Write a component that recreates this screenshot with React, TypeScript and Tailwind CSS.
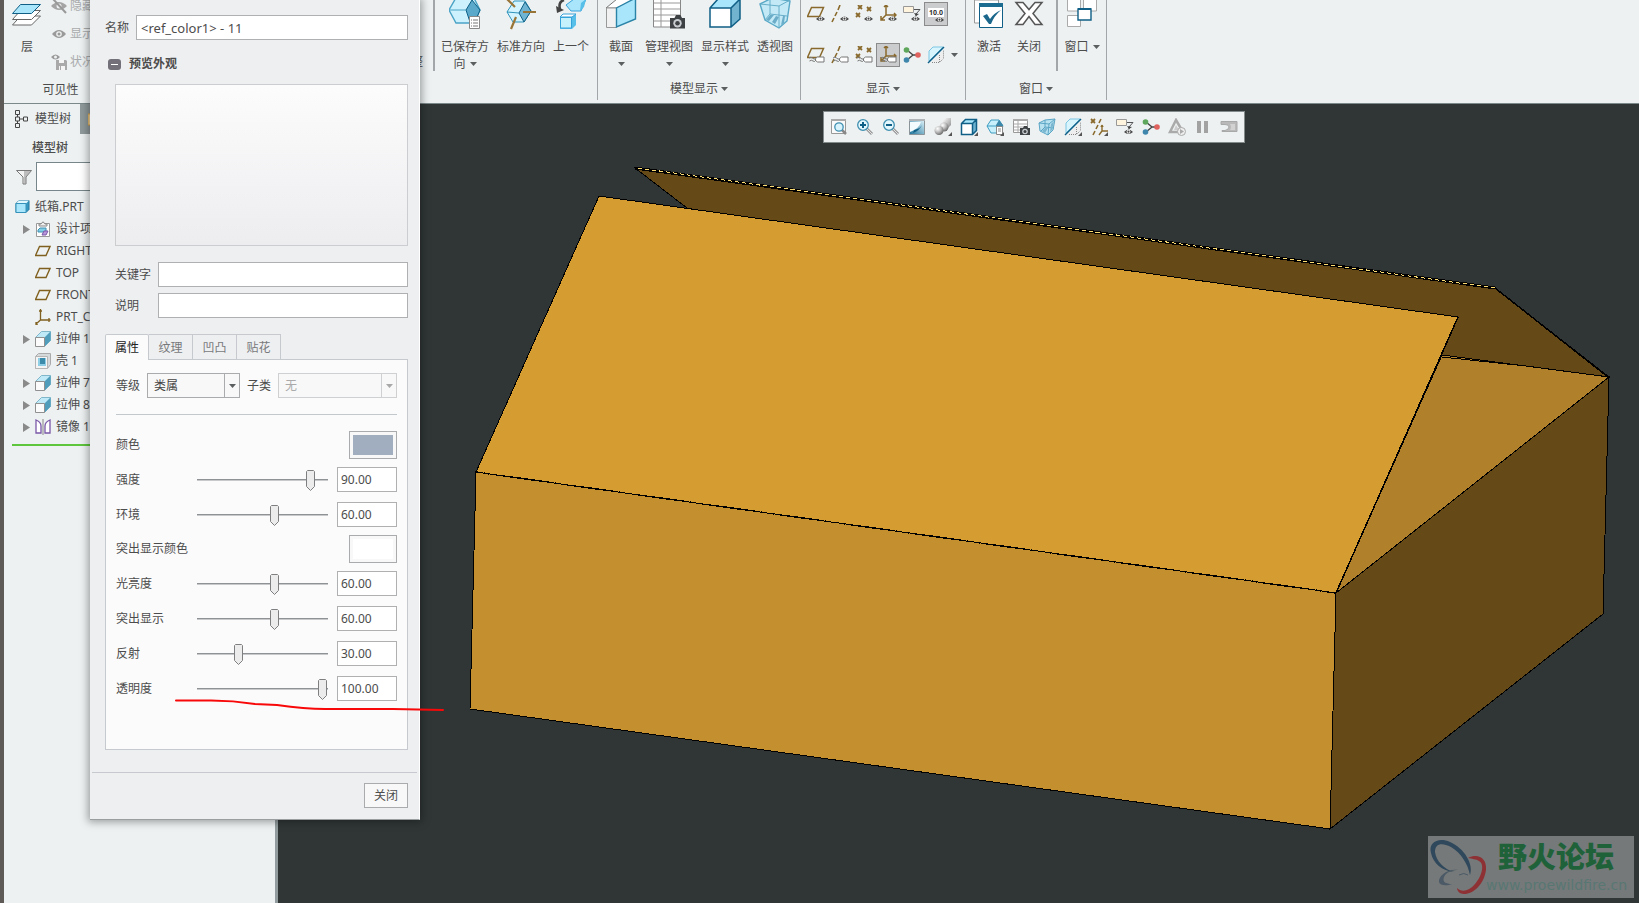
import type { ReactNode } from "react";

const OUT = "#0f5f86";
const SKY = "#a9e6fb";
const MID = "#6cb2d0";
const BRASS = "#8a6a2c";

type SvgProps = { w?: number; h?: number; children: ReactNode };

function Svg({ w = 18, h = 18, children }: SvgProps) {
  return (
    <svg width={w} height={h} viewBox={`0 0 ${w} ${h}`} fill="none" className="block shrink-0" aria-hidden="true">
      {children}
    </svg>
  );
}

function Caret({ light = false }: { light?: boolean }) {
  return (
    <svg width="7" height="4" viewBox="0 0 7 4" className="block shrink-0" aria-hidden="true">
      <path d="M0 0h7L3.500 4z" fill={light ? "#a8a8a8" : "#5c5f60"} />
    </svg>
  );
}

/* ---------- shared icon fragments ---------- */

const Eye = ({ x = 8, y = 10, c = "#444" }: { x?: number; y?: number; c?: string }) => (
  <g transform={`translate(${x} ${y})`}>
    <path d="M0 3Q4.500 -2 9 3Q4.500 7 0 3z" fill={c} />
    <circle cx="4.500" cy="2.700" r="1.900" fill="#fff" />
    <circle cx="4.500" cy="2.700" r="1.100" fill={c} />
  </g>
);

const Tag = () => (
  <g stroke="#777" fill="#fff">
    <path d="M8.500 12.500l2-1.500h6.500v5h-6.500l-2-1.500z" />
    <path d="M2 12q2-1.500 3.500 0t3 1M2.500 15q2-1.500 3.500 0t3-1" fill="none" />
  </g>
);

const Corner = () => <path d="M18 14v4h-4z" fill="#555" />;

const Cross = ({ x, y }: { x: number; y: number }) => (
  <path d={`M${x} ${y}l4 4m0-4l-4 4`} stroke={BRASS} strokeWidth="1.800" />
);

const Camera = ({ x = 8, y = 8 }: { x?: number; y?: number }) => (
  <g transform={`translate(${x} ${y})`}>
    <path d="M0 2h3l1-2h3l1 2h2v7H0z" fill="#3f4245" />
    <circle cx="5" cy="5.500" r="2.800" fill="#c9ced2" />
    <circle cx="5" cy="5.500" r="1.500" fill="#3f4245" />
  </g>
);

const Lens = ({ sign }: { sign?: ReactNode }) => (
  <>
    <path d="M10.500 10.500l5.500 5.500" stroke="#999" strokeWidth="3" />
    <path d="M10.500 10.500l5.500 5.500" stroke="#e3e3e3" strokeWidth="1" />
    <circle cx="7" cy="7" r="5.300" fill="#e4f7fd" stroke="#3f8fb0" strokeWidth="1.300" />
    {sign}
  </>
);

/* ---------- small icons ---------- */

const IcFit = () => (
  <Svg>
    <path d="M1.500 1.500h14v14h-14z" fill="#fafafa" stroke="#999" />
    <path d="M1 1h15v2H1z" fill="#aaa" />
    <path d="M12 12l4 4" stroke="#888" strokeWidth="2.500" />
    <circle cx="9" cy="9" r="4.200" fill="#d8f3fc" stroke="#3f8fb0" strokeWidth="1.300" />
  </Svg>
);
const IcZoomIn = () => <Svg><Lens sign={<path d="M4 7h6M7 4v6" stroke={OUT} strokeWidth="2" />} /></Svg>;
const IcZoomOut = () => <Svg><Lens sign={<path d="M4 7h6" stroke={OUT} strokeWidth="2" />} /></Svg>;
const IcRepaint = () => (
  <Svg>
    <defs>
      <linearGradient id="repaint" x1="1" y1="0" x2="0" y2="1">
        <stop offset="0" stopColor="#e4f7fd" />
        <stop offset="1" stopColor="#1d7299" />
      </linearGradient>
    </defs>
    <path d="M1.500 1.500h15v15h-15z" fill="url(#repaint)" stroke="#8b9498" />
    <path d="M2 4h11Q11 11 2 14z" fill="#f4fcff" />
    <path d="M1 1h16v2H1z" fill="#b0b4b6" />
    <path d="M14 7Q12 12 5 15l1-3Q12 11 14 7z" fill={OUT} />
  </Svg>
);
const IcShade = () => (
  <Svg>
    <defs>
      <linearGradient id="metal" x1="0" y1="0" x2="1" y2="1">
        <stop offset="0" stopColor="#fff" />
        <stop offset="1" stopColor="#8a8a8a" />
      </linearGradient>
      <radialGradient id="ball" cx=".35" cy=".3" r=".75">
        <stop offset="0" stopColor="#fff" />
        <stop offset=".5" stopColor="#bdbdbd" />
        <stop offset="1" stopColor="#666" />
      </radialGradient>
    </defs>
    <path d="M9 2l3-2h5v7l-3 3H9z" fill="url(#metal)" />
    <circle cx="10" cy="9" r="4.500" fill="url(#ball)" />
    <circle cx="5" cy="12.500" r="4.500" fill="url(#ball)" />
  </Svg>
);
const IcBox = () => (
  <Svg>
    <path d="M1.500 5.500l4-4h11v11l-4 4h-11z" fill={MID} />
    <path d="M1.500 5.500l4-4h11l-4 4z" fill={SKY} />
    <path d="M1.500 5.500h11v11h-11z" fill="#fff" />
    <path d="M1.500 5.500l4-4h11v11l-4 4h-11zh11v11m0-11l4-4" stroke={OUT} strokeWidth="1.500" />
  </Svg>
);
const IcOrient = () => (
  <Svg>
    <path d="M1 8l4-6h8l4 6-4 7H5z" fill="#c8effc" stroke="#3f9dc0" />
    <path d="M1 8h9" stroke="#3f9dc0" />
    <path d="M13 2l4 5v5h-7V7z" fill="#3c88ab" />
    <path d="M10.500 8.500h6v8h-6z" fill="#fff" stroke="#888" />
    <path d="M12 11h3m-3 2h3" stroke="#888" />
  </Svg>
);
const IcViewMgr = () => (
  <Svg>
    <path d="M1.500 1.500h14v13h-14z" fill="#fff" stroke="#999" />
    <path d="M1 1h15v2H1z" fill="#aaa" />
    <path d="M2 6h13M2 9h13M2 12h13M6 3v11" stroke="#aaa" />
    <Camera />
  </Svg>
);
const IcPersp = () => (
  <Svg>
    <path d="M1 5l6-3 10-1-2 11-5 5-8-4z" fill="#b9e2f1" stroke="#5aa5c4" />
    <path d="M1 5l10 1 6-5M11 6l-1 11M7 2v7l-4 4m4-4l9 1" stroke="#5aa5c4" />
    <path d="M4 13l4-4 2 1-3 5zm8 1l1-8 3-3-2 9z" fill="#7ab6cf" />
  </Svg>
);
const IcSection = () => (
  <Svg>
    <path d="M2 15V5l4-4h10z" fill="#d8f4fd" stroke="#7cc6e2" />
    <path d="M5 16.500h7.500l4-4V4z" fill="#eee" />
    <path d="M5 16.500h7.500l4-4V4M12.500 9v7" stroke="#888" strokeDasharray="1 1" />
    <path d="M1 17L17 1" stroke={OUT} strokeWidth="1.500" />
  </Svg>
);
const IcDatumAll = () => (
  <Svg>
    <Cross x={1} y={1} />
    <path d="M11 1L9 5M8 7l-2 4m-1 2l-2 4" stroke={BRASS} strokeWidth="1.600" />
    <path d="M12 7v6h6m-6 0l-3 4m3-10l-1 2m1-2l1 2" stroke={BRASS} strokeWidth="1.400" />
  </Svg>
);
const IcAnnot = () => (
  <Svg>
    <path d="M.5 1.500h10v6H.5z" fill="#fff5de" stroke="#999" />
    <path d="M11 4.500h6L13 9v2" stroke="#555" />
    <path d="M11 8l2 3 3-2z" fill="#444" />
    <Eye x={8} y={11} />
  </Svg>
);
const IcSpin = () => (
  <Svg>
    <path d="M4 4l6 5m0 0l-6 5m6-5h5" stroke="#444" strokeWidth="1.400" />
    <circle cx="3.500" cy="4" r="2.800" fill="#5ea65b" />
    <circle cx="3.500" cy="14" r="2.800" fill="#3f86ac" />
    <circle cx="15" cy="9" r="2.800" fill="#e0625f" />
  </Svg>
);
const IcSim = () => (
  <Svg>
    <path d="M8 2l7 12H2z" stroke="#aaa" strokeWidth="2.500" />
    <path d="M8 7l3 5H6z" fill="#ccc" />
    <circle cx="13.500" cy="13.500" r="4" fill="#eee" stroke="#aaa" />
    <path d="M12 11l4 2.500-4 2.500z" fill="#aaa" />
  </Svg>
);
const IcPause = () => <Svg><path d="M3 3h4v12H3zm7 0h4v12h-4z" fill="#a2a2a2" /></Svg>;
const IcGauge = () => (
  <Svg>
    <path d="M1 3.500h16v10H2v-1h3q4-1 4-3.500T5 6.500H1z" fill="#b9b9b9" stroke="#a8a8a8" />
    <path d="M10 6h5v6h-5q2-3 0-6z" fill="#d2d2d2" />
  </Svg>
);

const PlaneShape = () => <path d="M4.500 2.500h12l-4 9h-12z" stroke={BRASS} strokeWidth="1.500" />;
const AxisShape = () => <path d="M9 0L7 5M6 7l-2 4m-1 2l-2 4" stroke={BRASS} strokeWidth="1.600" />;
const PointShape = () => <><Cross x={3} y={0} /><Cross x={12} y={2} /><Cross x={1} y={8} /></>;
const CsysShape = () => <path d="M7 0v10h10M7 10l-5 5M5 2l2-2 2 2m6 6l2 2-2 2M2 11v4h4" stroke={BRASS} strokeWidth="1.500" />;

/* ---------- large ribbon icons ---------- */

const BigLayers = () => (
  <Svg w={32} h={28}>
    <path d="M9.500 16h20l-9 9H1.500z" fill="#fff" stroke="#666" />
    <path d="M9.500 10.500h20l-9 9H1.500z" fill="#fff" stroke="#666" />
    <path d="M9.500 4.500h20l-9 9H1.500z" fill={SKY} stroke={OUT} />
  </Svg>
);
const BigSaved = () => (
  <Svg w={32} h={30}>
    <path d="M0 10L8 -4h16l7 14-6 13H7z" fill="#cdf2fd" stroke="#4aa3c6" strokeWidth="1.400" />
    <path d="M17 10L23 0l8 10-5 12h-5z" fill="#5aa9cb" stroke={OUT} />
    <path d="M0 10h17" stroke="#4aa3c6" />
    <path d="M20.500 16.500h10v12h-10z" fill="#fff" stroke="#888" />
    <path d="M22 20h1m1 0h5m-7 3h1m1 0h5m-7 3h1m1 0h5" stroke="#777" />
  </Svg>
);
const BigStandard = () => (
  <Svg w={32} h={30}>
    <path d="M2 12L9 1h11l6 10-7 11H8z" fill="#d3f4fe" stroke="#2f93bb" />
    <path d="M14 13l6-11 6 9-7 11z" fill="#6fb5d3" stroke={OUT} />
    <path d="M2 12l12 1" stroke="#2f93bb" />
    <path d="M1 -2l9 9M18 12h13M11 17l-5 12" stroke="#987537" strokeWidth="2.200" />
  </Svg>
);
const BigPrevious = () => (
  <Svg w={32} h={30}>
    <path d="M9 0Q3 2 5 9" stroke="#444" strokeWidth="2.500" />
    <path d="M1 6l1 7 7-3z" fill="#444" />
    <path d="M11 5l8-6h12l-5 12H16z" fill={SKY} stroke="#36a2da" />
    <path d="M26 3l5-4-2 8-4 4z" fill="#58bfe8" />
    <path d="M5 17l3-3h13v11l-4 4H5z" fill="#58bfe8" />
    <path d="M5.500 17.500h11v10.500h-11z" fill="#c5f1fd" stroke="#36a2da" />
    <path d="M5 17l3-3h13l-4 3z" fill="#fff" stroke="#36a2da" />
  </Svg>
);
const BigSection = () => (
  <Svg w={32} h={30}>
    <path d="M1 8l11-9h19L11 8z" fill="#fff" stroke="#777" />
    <path d="M1.500 8h10v19.500h-10z" fill="#f1f1f1" stroke="#999" />
    <path d="M11.500 8L30.500 -2v21l-19 8z" fill={SKY} stroke="#2b84a8" strokeWidth="1.400" />
  </Svg>
);
const BigViewMgr = () => (
  <Svg w={34} h={30}>
    <path d="M1.500 -2h27v29h-27z" fill="#fff" stroke="#888" />
    <path d="M2 3h26M2 9h26M2 15h26M2 21h26M9 0v27" stroke="#999" />
    <g transform="translate(18 15) scale(1.500)"><Camera x={0} y={0} /></g>
  </Svg>
);
const BigStyle = () => (
  <Svg w={32} h={30}>
    <path d="M1 8l8-9h22v20l-9 8H1z" fill="#72b4cf" />
    <path d="M1 8l8-9h22l-9 9z" fill={SKY} />
    <path d="M1 8h21v19H1z" fill="#fff" />
    <path d="M1 8l8-9h22v20l-9 8H1zh21v19M22 8l9-9" stroke={OUT} strokeWidth="1.500" />
  </Svg>
);
const BigPersp = () => (
  <Svg w={32} h={30}>
    <path d="M1 4L13 -2 31 1l-3 20-8 7L6 20z" fill="#c3e9f6" stroke="#58a8c6" strokeWidth="1.400" />
    <path d="M1 4l19 2 11-6M20 6v22M11 0v14l-5 6m5-6l17 2" stroke="#67aec8" />
    <path d="M11 15l-4 5 3 1 5-6zm6 1l-4 6 3 2 4-7zm7 0l-2 9 3-2 1-7z" fill="#6badc8" />
  </Svg>
);
const BigActivate = () => (
  <Svg w={32} h={30}>
    <path d="M1.500 0h24v23h-24z" fill="#fff" stroke="#999" />
    <path d="M6.500 4.500h23v23h-23z" fill="#fff" stroke={OUT} />
    <path d="M6 3h24v4H6z" fill="#1c6c92" />
    <path d="M10 16l4-2 3 5q4-6 11-9-7 6-10 14h-2z" fill="#1b678c" />
  </Svg>
);
const BigClose = () => (
  <Svg w={32} h={30}>
    <path d="M3 2.500h7l6 7 6-7h7l-9 11 9 11h-7l-6-8-6 8H3l9-11z" fill="#fff" stroke="#555" strokeWidth="1.500" />
  </Svg>
);
const BigWindows = () => (
  <Svg w={32} h={30}>
    <path d="M1.500 -2h13v13h-13zm16 0h13v13h-13zM1.500 15.500h13v11h-13z" fill="#fff" stroke="#aaa" />
    <path d="M12 9h13v11H12z" fill="#fff" stroke={OUT} strokeWidth="1.400" />
    <path d="M12 8h13v2H12z" fill={OUT} />
  </Svg>
);

/* ---------- ribbon ---------- */

function BigButton({ icon, label, second, width, caret = false }: { icon: ReactNode; label: string; second?: string; width: string; caret?: boolean }) {
  return (
    <button type="button" className={`flex shrink-0 flex-col items-center ${width}`}>
      <span className="block h-[30px]">{icon}</span>
      <span className="mt-2 leading-[18px] whitespace-nowrap">{label}</span>
      {(second || caret) && (
        <span className="flex h-4 items-center gap-1 leading-4">
          {second}
          <Caret />
        </span>
      )}
    </button>
  );
}

function Group({ label, width, caret = true, children }: { label: string; width: string; caret?: boolean; children: ReactNode }) {
  return (
    <section className={`flex shrink-0 ${width}`}>
      <div className="flex min-w-0 flex-1 flex-col">
        <div className="flex h-[77px] items-start">{children}</div>
        <div className="flex h-7 items-center justify-center gap-[3px]">
          {label}
          {caret && label && <Caret />}
        </div>
      </div>
      <div className="h-[100px] w-px bg-[#a2a6a9]" />
    </section>
  );
}

const ShortRule = () => <div className="h-[71px] w-[2px] shrink-0 bg-[#a2a6a9]" />;

function Tool({ name, active = false, children }: { name: string; active?: boolean; children: ReactNode }) {
  return (
    <button
      type="button"
      aria-label={name}
      className={`flex size-6 items-center justify-center ${active ? "border border-[#8b8b8b] bg-[#cbcccd]" : ""}`}
    >
      {children}
    </button>
  );
}

const hiddenActions = [
  {
    label: "隐藏",
    icon: <Svg w={16} h={16}><path d="M0 8q8-8 16 0-8 8-16 0z" fill="#a4a4a4" /><circle cx="8" cy="8" r="2.500" fill="#eef1f2" /><path d="M2 1l13 14" stroke="#999" strokeWidth="2" /></Svg>,
  },
  {
    label: "显示",
    icon: <Svg w={16} h={16}><path d="M1 8q7-8 14 0-7 8-14 0z" fill="#9a9a9a" /><circle cx="8" cy="8" r="2.800" fill="#eef1f2" /><circle cx="8" cy="8" r="1.500" fill="#9a9a9a" /></Svg>,
  },
  {
    label: "状况",
    icon: <Svg w={16} h={16}><path d="M0 3q4.500-5 9 0-4.500 5-9 0z" fill="#9a9a9a" /><circle cx="4.500" cy="3" r="1.500" fill="#eef1f2" /><path d="M5 6h10l1 1v9H5z" fill="#a9a9a9" /><path d="M8 6h5v3H8zm0 6h1v4H8zm2 0h4v4h-4z" fill="#f4f4f4" /></Svg>,
  },
];

function Ribbon() {
  return (
    <header className="flex h-[104px] shrink-0 overflow-hidden border-b border-[#7c898b] bg-[#edf1f2]">
      <Group label="可见性" caret={false} width="w-[114px]">
        <BigButton icon={<BigLayers />} label="层" width="ml-[5px] w-9" />
        <div className="flex flex-col pl-[6px] text-[#a9abac]">
          {hiddenActions.map((a) => (
            <button key={a.label} type="button" className="-mt-2 mb-2 flex h-7 items-center gap-[3px]">
              {a.icon}
              {a.label}
            </button>
          ))}
        </div>
      </Group>
      <Group label="" width="w-[480px]">
        <div className="flex h-[71px] w-[305px] items-end justify-end pb-px">
          <span className="leading-4">调整</span>
        </div>
        <div className="ml-[10px] flex">
          <ShortRule />
          <BigButton icon={<BigSaved />} label="已保存方" second="向" width="ml-[2px] w-14" />
          <BigButton icon={<BigStandard />} label="标准方向" width="w-14" />
          <BigButton icon={<BigPrevious />} label="上一个" width="w-11" />
        </div>
      </Group>
      <Group label="模型显示" width="w-[203px]">
        <BigButton icon={<BigSection />} label="截面" caret width="w-[46px]" />
        <BigButton icon={<BigViewMgr />} label="管理视图" caret width="w-[50px]" />
        <BigButton icon={<BigStyle />} label="显示样式" caret width="w-[62px]" />
        <BigButton icon={<BigPersp />} label="透视图" width="w-[38px]" />
      </Group>
      <Group label="显示" width="w-[165px]">
        <div className="flex flex-col gap-[17px] pt-[2px] pl-[3px]">
          <div className="flex">
            <Tool name="平面显示"><Svg><PlaneShape /><Eye x={9} y={11} /></Svg></Tool>
            <Tool name="轴显示"><Svg><AxisShape /><Eye x={9} y={11} /></Svg></Tool>
            <Tool name="点显示"><Svg><PointShape /><Eye x={9} y={11} /></Svg></Tool>
            <Tool name="坐标系显示"><Svg><CsysShape /><Eye x={9} y={11} /></Svg></Tool>
            <Tool name="注释显示"><IcAnnot /></Tool>
            <Tool name="尺寸显示" active>
              <svg width="18" height="18" viewBox="0 0 18 18" aria-hidden="true">
                <path d="M1 3h16v9H1z" fill="#fff" />
                <text x="9" y="10" fontSize="7" fontWeight="bold" textAnchor="middle" fill="#333">10.0</text>
                <Eye x={8} y={12} />
              </svg>
            </Tool>
          </div>
          <div className="flex items-center">
            <Tool name="平面标记"><Svg><PlaneShape /><Tag /></Svg></Tool>
            <Tool name="轴标记"><Svg><AxisShape /><Tag /></Svg></Tool>
            <Tool name="点标记"><Svg><PointShape /><Tag /></Svg></Tool>
            <Tool name="坐标系标记" active><Svg><CsysShape /><Tag /></Svg></Tool>
            <Tool name="旋转中心"><IcSpin /></Tool>
            <Tool name="截面"><IcSection /></Tool>
            <span className="ml-[3px]"><Caret /></span>
          </div>
        </div>
      </Group>
      <Group label="窗口" width="w-[141px]">
        <BigButton icon={<BigActivate />} label="激活" width="ml-[3px] w-10" />
        <BigButton icon={<BigClose />} label="关闭" width="mr-[7px] w-10" />
        <ShortRule />
        <button type="button" className="flex flex-1 flex-col items-center">
          <span className="block h-[30px]"><BigWindows /></span>
          <span className="mt-2 flex items-center gap-1 leading-[18px]">窗口<Caret /></span>
        </button>
      </Group>
    </header>
  );
}

/* ---------- model tree ---------- */

const IcPlane = () => <Svg w={16} h={16}><path d="M4.500 3.500h10.500l-4 9H.5z" stroke="#80601f" strokeWidth="1.400" /></Svg>;
const IcCsys = () => <Svg w={16} h={16}><path d="M5.500 0v11h10M5.500 11L1 15M4 2h3M14 9v4M1 13v3h2" stroke="#80601f" strokeWidth="1.300" /></Svg>;
const IcExtrude = () => (
  <Svg w={16} h={16}>
    <path d="M.5 6.500l6-6h9v9l-6 6z" fill="#bfe9f6" stroke="#7fb6ca" />
    <path d="M9.500 6.500l6-6v9l-6 6z" fill="#4f9dbb" />
    <path d="M.5 6.500h9v9h-9z" fill="#fbfbfb" stroke="#909090" />
  </Svg>
);
const IcShell = () => (
  <Svg w={16} h={16}>
    <path d="M.5 3.500l3-3h12v11l-3 4H.5z" fill="#d6dadb" stroke="#aaa" />
    <path d="M.5 3.500h12v12H.5z" fill="#f4f4f4" stroke="#b5b5b5" />
    <path d="M3 5h8v8H3z" fill="#8fcfe5" />
    <path d="M5 5h5v6H5z" fill="#3c8bab" />
  </Svg>
);
const IcMirror = () => (
  <Svg w={16} h={16}>
    <path d="M1 14V1q5 2 5 6v7zM15 14V1q-5 2-5 6v7z" fill="#fff" stroke="#7a58a8" strokeWidth="1.300" />
    <path d="M8 0v16" stroke="#888" />
  </Svg>
);
const IcDesign = () => (
  <Svg w={16} h={16}>
    <path d="M1.500 2.500h13v13h-13z" fill="#fff" stroke="#999" />
    <path d="M4 3h2q2-4 4 0h2v2H4z" fill="#eee" stroke="#888" />
    <path d="M3 9l2-2h6v4H3z" fill="#80cfe8" stroke="#3f8fb0" />
    <path d="M7 14l2-4h4l-2 4z" fill="#b897dc" stroke="#7a58a8" />
  </Svg>
);
const IcPart = () => (
  <Svg w={16} h={16}>
    <path d="M1 4.500L4 1.500h10v9l-3 3H1z" fill="#3698c0" stroke="#23799f" />
    <path d="M1 4.500L4 1.500h10l-3 3z" fill="#e2f8ff" />
    <path d="M1 4.500h10v9H1z" fill={SKY} stroke="#3593bb" />
  </Svg>
);

const treeItems: { label: string; icon: ReactNode; branch?: boolean }[] = [
  { label: "设计项", icon: <IcDesign />, branch: true },
  { label: "RIGHT", icon: <IcPlane /> },
  { label: "TOP", icon: <IcPlane /> },
  { label: "FRONT", icon: <IcPlane /> },
  { label: "PRT_CSYS", icon: <IcCsys /> },
  { label: "拉伸 1", icon: <IcExtrude />, branch: true },
  { label: "壳 1", icon: <IcShell /> },
  { label: "拉伸 7", icon: <IcExtrude />, branch: true },
  { label: "拉伸 8", icon: <IcExtrude />, branch: true },
  { label: "镜像 1", icon: <IcMirror />, branch: true },
];

function ModelTree() {
  return (
    <aside className="flex w-[274px] shrink-0 flex-col border-r-[3px] border-[#929c9e] bg-[#edf1f2]">
      <div className="flex h-[30px]">
        <button type="button" className="flex w-[76px] items-center gap-[6px] pl-[10px] whitespace-nowrap">
          <Svg w={15} h={20}>
            <path d="M1.500 1.500h4v4h-4zm0 6.500h4v4h-4zm0 6.500h4v4h-4zM9.500 8h4v4h-4zM3.500 6v2m0 4v2M6 10h3" stroke="#444" />
          </Svg>
          模型树
        </button>
        <button type="button" aria-label="文件夹浏览器" className="flex w-20 items-center bg-[#8f999b] pl-2">
          <Svg w={16} h={16}><path d="M0 3h6l1 2h8v9H0z" fill="#f4d79b" stroke="#dca54a" /></Svg>
        </button>
      </div>
      <h2 className="pl-7 leading-7 font-medium">模型树</h2>
      <div className="flex h-[29px] items-center gap-1 pl-3">
        <Svg w={16} h={16}>
          <path d="M.5 1.500h15L10 8v7H7V8z" fill="#f3f3f3" stroke="#777" />
          <path d="M8 2h7L10 8v7H8z" fill="#999" opacity=".6" />
        </Svg>
        <input aria-label="过滤器" className="h-[29px] min-w-0 flex-1 border border-[#76868a] bg-white px-1" />
      </div>
      <ul className="mt-[5px]">
        <li className="flex h-[22px] items-center gap-1 pl-[11px]"><IcPart />纸箱.PRT</li>
        {treeItems.map((t) => (
          <li key={t.label} className="flex h-[22px] items-center gap-[5px] pl-[15px]">
            <span className="flex w-[11px] justify-end">
              {t.branch && <svg width="8" height="9" viewBox="0 0 8 9" aria-hidden="true"><path d="M1 0l7 4.500L1 9z" fill="#8a8a8a" /></svg>}
            </span>
            {t.icon}
            <span className="whitespace-nowrap">{t.label}</span>
          </li>
        ))}
      </ul>
      <div className="mt-[6px] ml-2 h-[2px] bg-[#5ec63d]" />
    </aside>
  );
}

/* ---------- viewport ---------- */

const viewTools: { name: string; icon: ReactNode }[] = [
  { name: "重新调整", icon: <IcFit /> },
  { name: "放大", icon: <IcZoomIn /> },
  { name: "缩小", icon: <IcZoomOut /> },
  { name: "重画", icon: <IcRepaint /> },
  { name: "渲染选项", icon: <Svg><IcShade /><Corner /></Svg> },
  { name: "显示样式", icon: <Svg><IcBox /><Corner /></Svg> },
  { name: "已保存方向", icon: <Svg><IcOrient /><Corner /></Svg> },
  { name: "视图管理器", icon: <IcViewMgr /> },
  { name: "透视图", icon: <IcPersp /> },
  { name: "截面", icon: <Svg><IcSection /><Corner /></Svg> },
  { name: "基准显示", icon: <Svg><IcDatumAll /><Corner /></Svg> },
  { name: "注释显示", icon: <IcAnnot /> },
  { name: "旋转中心", icon: <IcSpin /> },
  { name: "仿真", icon: <IcSim /> },
  { name: "暂停", icon: <IcPause /> },
  { name: "停止", icon: <IcGauge /> },
];

function Carton() {
  return (
    <svg className="h-full w-full" viewBox="278 104 1361 799" preserveAspectRatio="xMinYMin meet" shapeRendering="crispEdges" role="img" aria-label="纸箱">
      <g stroke="#000" strokeWidth="1">
        <path d="M635 168L1495 288 1609 377 1440 358 687 208z" fill="#654917" />
        <path d="M1442 355L1609 377 1336 593z" fill="#b0802b" />
        <path d="M1442 357l84 9 83 11" fill="none" />
        <path d="M1336 593L1609 377 1603 614 1330 829z" fill="#654917" />
        <path d="M476 472L1336 593 1330 829 470 709z" fill="#c48f2e" />
        <path d="M599 196L1458 317 1336 593 476 472z" fill="#d59c32" />
      </g>
      <path d="M635 168L1495 288" stroke="#000" strokeWidth="3" />
      <path d="M638 168L1495 288" stroke="#fbdc72" strokeWidth="1" strokeDasharray="4 3" />
      <path d="M1458 317L1336 593M1495 288l113 89" stroke="#000" strokeWidth="1.500" />
      <path d="M476 472L1336 593" stroke="#000" strokeWidth="1.500" strokeDasharray="5 3" />
    </svg>
  );
}

function Watermark() {
  return (
    <div className="absolute right-[5px] bottom-[5px] flex h-[62px] w-[206px] bg-[#757979]">
      <svg width="60" height="62" viewBox="0 0 60 62" className="shrink-0" aria-hidden="true">
        <path fillRule="evenodd" d="M3 17C0 6 11 1 22 6 36 12 46 28 42 39 40 28 33 17 23 11 13 6 7 8 7 16 8 25 16 33 26 36 14 35 5 27 3 17z" fill="#30485c" />
        <path d="M40 22C50 17 59 22 58 34 56 48 46 58 36 58 32 58 29 55 29 52 34 57 41 55 47 48 54 40 57 28 51 25 48 23 44 23 40 22z" fill="#8e3134" />
        <path d="M30 34C20 32 10 40 11 46 12 50 19 50 24 48 18 48 14 46 16 41 18 36 25 34 30 34z" fill="#4b5a66" />
        <path d="M31 39q5-3 9 0" stroke="#4b5a66" fill="none" />
      </svg>
      <div className="-ml-[2px] flex flex-col whitespace-nowrap">
        <span className="pl-3 text-[29px] leading-[41px] font-black text-[#1f6239]">野火论坛</span>
        <a href="#site" className="font-['DejaVu_Sans','Noto_Sans',sans-serif] text-[14px] leading-4 text-[#587773]">www.proewildfire.cn</a>
      </div>
    </div>
  );
}

function Viewport() {
  return (
    <main className="relative min-w-0 flex-1 overflow-hidden bg-[#303636]">
      <Carton />
      <div role="toolbar" aria-label="视图工具" className="absolute top-[7px] left-[545px] flex h-8 border border-[#828a8b] bg-[#edf1f2] px-[2px]">
        {viewTools.map((t) => (
          <button key={t.name} type="button" aria-label={t.name} className="flex w-[26px] items-center justify-center">
            {t.icon}
          </button>
        ))}
      </div>
      <Watermark />
    </main>
  );
}

/* ---------- appearance dialog ---------- */

const field = "h-[25px] min-w-0 border border-[#aeb0b2] bg-white px-1";

function Swatch({ id, label, fill }: { id: string; label: string; fill: string }) {
  return (
    <div className="flex h-7 items-center justify-between">
      <label htmlFor={id}>{label}</label>
      <button id={id} type="button" className="h-7 w-12 border border-[#a9abad] bg-[#f8f8f8] p-[3px]">
        <span className={`block h-full ${fill}`} />
      </button>
    </div>
  );
}

function SliderRow({ id, label, value }: { id: string; label: string; value: number }) {
  return (
    <div className="flex h-[25px] items-center">
      <label htmlFor={id} className="flex-1">{label}</label>
      <div className="relative h-5 w-[131px]">
        <div className="h-full py-[9px]"><div className="h-[2px] border-b border-[#c8c9ca] bg-[#8f9294]" /></div>
        <svg className="absolute top-0" style={{ left: 1 + value * 1.2 }} width="9" height="21" viewBox="0 0 9 21" aria-hidden="true">
          <path d="M.5 1.500l1-1h6l1 1v15l-4 4-4-4z" fill="#ececec" stroke="#7d7f81" />
        </svg>
        <input
          id={id}
          type="range"
          min={0}
          max={100}
          defaultValue={value}
          className="absolute inset-0 h-full w-full opacity-0"
        />
      </div>
      <input aria-label={`${label}数值`} defaultValue={value.toFixed(2)} className={`${field} ml-[9px] w-[60px] pl-[3px]`} />
    </div>
  );
}

function Combo({ id, value, width, disabled = false }: { id: string; value: string; width: string; disabled?: boolean }) {
  return (
    <div className={`relative flex h-[25px] ${width}`}>
      <select
        id={id}
        disabled={disabled}
        className={`w-full appearance-none border bg-[#f8f8f8] pl-[6px] ${disabled ? "border-[#cfd0d1] text-[#aaa]" : "border-[#a9abad] text-[#444]"}`}
      >
        <option>{value}</option>
      </select>
      <span className={`pointer-events-none absolute inset-y-0 right-0 flex w-4 items-center justify-center border-l ${disabled ? "border-[#cfd0d1]" : "border-[#a9abad]"}`}>
        <Caret light={disabled} />
      </span>
    </div>
  );
}

const tabs = ["属性", "纹理", "凹凸", "贴花"];

function AppearanceDialog() {
  return (
    <div role="dialog" aria-label="模型外观编辑器" className="absolute top-0 left-[90px] w-[330px] border-r border-b border-r-white border-b-[#9b9ea0] bg-[#eeeff1] shadow-[0_0_8px_2px_rgba(0,0,0,0.35)]">
      <div className="flex flex-col pr-[11px] pl-[15px]">
        <div className="flex h-10 items-end">
          <label htmlFor="name" className="w-[31px] leading-[25px]">名称</label>
          <input id="name" defaultValue="<ref_color1> - 11" className={`${field} flex-1 text-[13px]`} />
        </div>
        <button type="button" className="mt-[11px] flex h-[26px] items-center gap-2 pl-[3px] font-bold">
          <span className="flex h-[11px] w-[13px] items-center justify-center rounded-[3px] bg-[#737079]"><span className="h-px w-[7px] bg-white" /></span>
          预览外观
        </button>
        <div className="flex flex-col pl-[10px]">
          <div className="mt-[7px] h-[162px] border border-[#cbcdd0] bg-linear-to-b from-[#fcfcfc] to-[#ededf0]" />
          <div className="mt-4 flex items-center">
            <label htmlFor="keyword" className="w-[43px]">关键字</label>
            <input id="keyword" className={`${field} flex-1`} />
          </div>
          <div className="mt-[6px] flex items-center">
            <label htmlFor="description" className="w-[43px]">说明</label>
            <input id="description" className={`${field} flex-1`} />
          </div>
        </div>
        <div role="tablist" className="mt-4 flex h-[25px]">
          {tabs.map((t, i) => (
            <button
              key={t}
              type="button"
              role="tab"
              aria-selected={i === 0}
              className={`w-11 border-t border-r border-[#c6c9cd] pt-px ${i === 0 ? "relative -mb-px rounded-t-[2px] border-l bg-[#fbfbfb] text-[#222]" : "text-[#77797b]"}`}
            >
              {t}
            </button>
          ))}
        </div>
        <div role="tabpanel" className="h-[391px] border border-[#c6c9cd] bg-[#fbfbfb] px-[10px] pt-[13px]">
          <div className="flex items-center">
            <label htmlFor="grade" className="w-[31px]">等级</label>
            <Combo id="grade" value="类属" width="w-[93px]" />
            <label htmlFor="subclass" className="ml-[7px] w-[31px]">子类</label>
            <Combo id="subclass" value="无" width="flex-1" disabled />
          </div>
          <div className="mt-4 h-px bg-[#c3c8cc]" />
          <div className="mt-4 flex flex-col">
            <Swatch id="color" label="颜色" fill="bg-[#a1aebf]" />
            <div className="mt-2 mb-2 flex flex-col gap-[10px]">
              <SliderRow id="intensity" label="强度" value={90} />
              <SliderRow id="ambient" label="环境" value={60} />
            </div>
            <Swatch id="highlight" label="突出显示颜色" fill="bg-white" />
            <div className="mt-2 flex flex-col gap-[10px]">
              <SliderRow id="shine" label="光亮度" value={60} />
              <SliderRow id="spec" label="突出显示" value={60} />
              <SliderRow id="reflect" label="反射" value={30} />
              <SliderRow id="alpha" label="透明度" value={100} />
            </div>
          </div>
        </div>
      </div>
      <div className="mx-[2px] mt-[22px] border-t border-[#c6c9cd]">
        <div className="flex justify-end pt-[10px] pr-[9px] pb-[11px]">
          <button type="button" className="h-[25px] w-11 border border-[#a9abad] bg-[#f8f8f8]">关闭</button>
        </div>
      </div>
    </div>
  );
}

export default function App() {
  return (
    <div className="relative flex h-screen overflow-hidden bg-[#303636] font-['Noto_Sans','Noto_Sans_CJK_SC',sans-serif] text-[12px] leading-4 text-[#4c4c4c]">
      <div className="w-1 shrink-0 bg-[#5e5a57]" />
      <div className="flex min-w-0 flex-1 flex-col">
        <Ribbon />
        <div className="flex min-h-0 flex-1">
          <ModelTree />
          <Viewport />
        </div>
      </div>
      <AppearanceDialog />
      <svg className="pointer-events-none absolute top-[696px] left-[174px]" width="272" height="18" viewBox="174 696 272 18" fill="none" aria-hidden="true">
        <path d="M176 700.500h35q22 0 44 3.500l22 1q28 4 48 4h68l50 1" stroke="#f80808" strokeWidth="2" strokeLinecap="round" />
      </svg>
    </div>
  );
}
